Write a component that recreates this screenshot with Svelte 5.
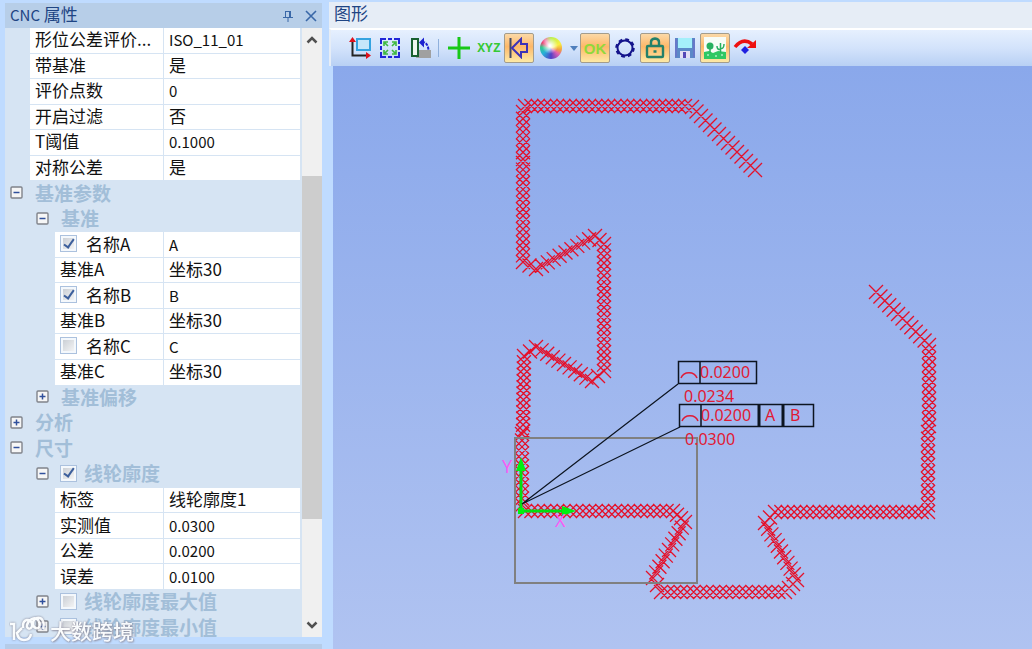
<script>
  let rows = $state([
    { name: "形位公差评价...", value: "ISO_11_01", depth: 1 },
    { name: "带基准", value: "是", depth: 1 },
    { name: "评价点数", value: "0", depth: 1 },
    { name: "开启过滤", value: "否", depth: 1 },
    { name: "T阈值", value: "0.1000", depth: 1 },
    { name: "对称公差", value: "是", depth: 1 },
    { name: "基准参数", depth: 0, group: true, open: true },
    { name: "基准", depth: 1, group: true, open: true },
    { name: "名称A", value: "A", depth: 2, checked: true },
    { name: "基准A", value: "坐标30", depth: 2 },
    { name: "名称B", value: "B", depth: 2, checked: true },
    { name: "基准B", value: "坐标30", depth: 2 },
    { name: "名称C", value: "C", depth: 2, checked: false },
    { name: "基准C", value: "坐标30", depth: 2 },
    { name: "基准偏移", depth: 1, group: true, open: false },
    { name: "分析", depth: 0, group: true, open: false },
    { name: "尺寸", depth: 0, group: true, open: true },
    { name: "线轮廓度", depth: 1, group: true, open: true, checked: true },
    { name: "标签", value: "线轮廓度1", depth: 2 },
    { name: "实测值", value: "0.0300", depth: 2 },
    { name: "公差", value: "0.0200", depth: 2 },
    { name: "误差", value: "0.0100", depth: 2 },
    { name: "线轮廓度最大值", depth: 1, group: true, open: false, checked: false },
    { name: "线轮廓度最小值", depth: 1, group: true, open: false, checked: false },
  ]);

  const scroll = { before: 124, thumb: 343, after: 94 };

  // only latin characters: drawn one size smaller
  const isLatin = (text) => /^[\x20-\x7e]+$/.test(text);

  // measured contour, one polyline per scan
  const scans = [
    [[422, 104], [359, 41], [352, 40], [192, 40], [190, 46], [190, 93]],
    [[190, 97], [190, 196], [203, 203], [262, 170], [271, 178], [271, 305], [259, 315], [203, 281], [191, 290], [190, 365]],
    [[189, 368], [189, 439]],
    [[192, 445], [340, 445], [352, 456], [320, 512], [328, 526], [452, 526], [464, 514], [432, 457], [442, 446], [595, 446], [595, 366]],
    [[596, 360], [596, 279], [543, 226]],
  ];
  const step = 6.5;
  const arm = 7;

  function crosses(points) {
    let d = "";
    for (let i = 1; i < points.length; i++) {
      const [x0, y0] = points[i - 1];
      const [x1, y1] = points[i];
      const n = Math.max(1, Math.round(Math.hypot(x1 - x0, y1 - y0) / step));
      for (let k = i === 1 ? 0 : 1; k <= n; k++) {
        const x = x0 + ((x1 - x0) * k) / n;
        const y = y0 + ((y1 - y0) * k) / n;
        d += `M${x - arm} ${y - arm}L${x + arm} ${y + arm}M${x - arm} ${y + arm}L${x + arm} ${y - arm}`;
      }
    }
    return d;
  }

  const contour = scans.map(crosses).join("");
</script>

<div class="window">
  <aside class="dock">
    <header class="dock-title">
      <h2><span class="latin">CNC</span> 属性</h2>
      <button aria-label="固定">
        <svg width="12" height="12" viewBox="0 0 12 12"><path d="M3.5 1v6M8.5 1v6M7.5 1v6M3 1.5h6M1 7.5h10M6 8v4" /></svg>
      </button>
      <button aria-label="关闭">
        <svg width="12" height="12" viewBox="0 0 12 12"><path d="M1 1l10 10M11 1L1 11" stroke-width="1.6" /></svg>
      </button>
    </header>
    <div class="dock-body">
      <table class="props">
        <tbody>
          {#each rows as row, i}
            <tr class="depth-{row.depth}" class:group={row.group}>
              <th scope="row">
                {#if row.group}
                  <button class="toggle" aria-label={row.name} aria-expanded={row.open} onclick={() => (row.open = !row.open)}>
                    <svg width="13" height="13" viewBox="0 0 13 13">
                      <rect x="1" y="1" width="11" height="11" rx="1" />
                      <path d={row.open ? "M3.5 6.5h6" : "M3.5 6.5h6M6.5 3.5v6"} />
                    </svg>
                  </button>
                {/if}
                {#if row.checked !== undefined}
                  <input type="checkbox" id="row-{i}" bind:checked={row.checked} />
                  <label for="row-{i}">{row.name}</label>
                {:else}
                  <span>{row.name}</span>
                {/if}
              </th>
              {#if !row.group}
                <td class:latin={isLatin(row.value)}>{row.value}</td>
              {/if}
            </tr>
          {/each}
        </tbody>
      </table>
      <div class="scrollbar">
        <button aria-label="向上滚动"><svg width="12" height="8" viewBox="0 0 12 8"><path d="M1.5 6.5L6 2l4.5 4.5" /></svg></button>
        <div style:flex-grow={scroll.before}></div>
        <div class="thumb" style:flex-grow={scroll.thumb}></div>
        <div style:flex-grow={scroll.after}></div>
        <button aria-label="向下滚动"><svg width="12" height="8" viewBox="0 0 12 8"><path d="M1.5 1.5L6 6l4.5-4.5" /></svg></button>
      </div>
    </div>
    <div class="dock-next"></div>

    <div class="watermark">
      <svg width="38" height="30" viewBox="0 0 38 30">
        <path d="M1 9h4v16M13 13l-5 5q1 7 7 7t7-6M14 13c-1-10 8-10 9-4s-6 6-5 1 8-9 11-5 2 9-2 8-4-9 1-10 8 4 6 11" />
      </svg>
      <span>大数跨境</span>
    </div>
  </aside>

  <main class="view">
    <header class="view-title"><h2>图形</h2></header>
    <div class="toolbar">
      <button aria-label="坐标系">
        <svg width="24" height="24" viewBox="0 0 24 24">
          <rect x="9" y="3" width="13" height="11" fill="#c5e6fa" stroke="#35a3e0" stroke-width="2" />
          <path d="M4.5 4v15.500H19" fill="none" stroke="#222" stroke-width="2" />
          <path d="M1 6l3.500-5L8 6zM18 16l5 3.500-5 3.500z" fill="#e0101c" />
        </svg>
      </button>
      <button aria-label="适合窗口">
        <svg width="22" height="22" viewBox="0 0 22 22" fill="none">
          <path d="M2 7V2h5M9 2h4M15 2h5v5M20 9v4M20 15v5h-5M13 20H9M7 20H2v-5M2 13V9" stroke="#2026d8" stroke-width="2" />
          <path d="M9 9L6 6M5 9V5h4M13 9l3-3M13 5h4v4M9 13l-3 3M5 13v4h4M13 13l3 3M17 13v4h-4" stroke="#3cb93c" stroke-width="1.6" />
        </svg>
      </button>
      <button aria-label="旋转">
        <svg width="24" height="24" viewBox="0 0 24 24">
          <path d="M11 14h12v8H8z" fill="#a0a0a0" />
          <rect x="4" y="3" width="6" height="17" fill="#eef6f0" stroke="#186030" stroke-width="2" />
          <path d="M14 6c4 0 6 3 6.500 8" fill="none" stroke="#1c22d0" stroke-width="2" stroke-dasharray="3 1" />
          <path d="M11 6.500l5-5v10z" fill="#1c22d0" />
        </svg>
      </button>
      <i class="separator"></i>
      <button aria-label="十字">
        <svg width="22" height="22" viewBox="0 0 22 22"><path d="M11 0v22M0 11h22" stroke="#18c818" stroke-width="3" /></svg>
      </button>
      <button class="xyz">XYZ</button>
      <button class="active" aria-label="返回">
        <svg width="22" height="22" viewBox="0 0 22 22" fill="none">
          <path d="M2.500 1v20" stroke="#444a66" stroke-width="2" />
          <path d="M4 11l9-9v5h6v8h-6v5z" stroke="#3c32b8" stroke-width="2" />
        </svg>
      </button>
      <button class="palette" aria-label="颜色"><span class="ball"></span></button>
      <button class="drop" aria-label="颜色选项">
        <svg width="8" height="5" viewBox="0 0 8 5"><path d="M0 0h8L4 5z" fill="#4f7fbd" /></svg>
      </button>
      <button class="active ok">OK</button>
      <button aria-label="圆">
        <svg width="22" height="22" viewBox="0 0 22 22" fill="none" stroke="#14148c">
          <circle cx="11" cy="11" r="7.500" stroke-width="2" />
          <circle cx="11" cy="11" r="8.500" stroke-width="2.500" stroke-dasharray="3.700 2.975" />
        </svg>
      </button>
      <button class="active" aria-label="锁定">
        <svg width="22" height="22" viewBox="0 0 22 22" fill="none" stroke="#23806a" stroke-width="2.400">
          <rect x="3" y="9" width="16" height="11" rx="1" />
          <path d="M7 9V5q0-3 4-3.500 4 .5 4 3.500v4M9.500 14.500h3" />
        </svg>
      </button>
      <button aria-label="保存">
        <svg width="22" height="22" viewBox="0 0 22 22">
          <path d="M1 1h20v20H1z" fill="#5b88c8" />
          <path d="M4 1h14v10H4z" fill="#a4effa" />
          <path d="M6 14h10v7H6z" fill="#e2dff5" />
          <path d="M9 15h3v6H9z" fill="#5548b8" />
          <path d="M2 2v18M20 2v18" stroke="#7568c8" />
        </svg>
      </button>
      <button class="active" aria-label="图片">
        <svg width="22" height="22" viewBox="0 0 22 22">
          <path d="M0 0h22v22H0z" fill="#f7fcf7" />
          <path d="M0 15l5-1 4 2 5-2 8 1v7H0z" fill="#2fc864" />
          <circle cx="6" cy="9" r="3.500" fill="#28b060" />
          <path d="M6 10v6M16.500 6v10M13 9q0 4 3.500 3.500M20 7q0 5-3.500 4.500" fill="none" stroke="#28b060" stroke-width="1.500" />
          <path d="M3 18h2M11 19h2M17 18h2" stroke="#e9fff0" />
        </svg>
      </button>
      <button aria-label="旋转视图">
        <svg width="24" height="22" viewBox="0 0 24 22">
          <path d="M2 10Q10 0 19 7" fill="none" stroke="#ee1010" stroke-width="3.500" />
          <path d="M23 3v8h-9z" fill="#ee1010" />
          <path d="M12 9l4 4-4 4-4-4z" fill="#2020e0" />
        </svg>
      </button>
    </div>

    <div class="canvas">
      <svg width="100%" height="100%">
        <path class="contour" d={contour} />
        <rect class="frame" x="182" y="372" width="182" height="145" />
        <g class="axes">
          <path class="shaft" d="M188 402v43h44" />
          <path d="M188 391l5 14h-10zM243 445l-14-5v10zM185 442h6v6h-6z" />
          <text x="169" y="407">Y</text>
          <text x="222" y="461">X</text>
        </g>
        <g class="callout">
          <path class="leader" d="M189 438L345 318M189 438L347 361" />
          <rect x="345.5" y="295.5" width="78" height="22" />
          <path d="M367 296v21" />
          <rect x="346.5" y="338.5" width="134" height="22" />
          <path d="M368 339v21" />
          <path class="thick" d="M426 339v21M450 339v21" />
          <path class="profile" d="M348 312a8.500 8 0 0 1 16 0M349 355a8.500 8 0 0 1 16 0" />
          <text x="367" y="312">0.0200</text>
          <text x="351" y="336">0.0234</text>
          <text x="368" y="355">0.0200</text>
          <text x="432" y="355">A</text>
          <text x="457" y="355">B</text>
          <text x="352" y="379">0.0300</text>
        </g>
      </svg>
    </div>
  </main>
</div>

<style>
  :global(body) {
    margin: 0;
  }

  .window {
    display: flex;
    height: 100vh;
    overflow: hidden;
    background: #bfdbff;
    color: #111;
    font: 17px "Noto Sans CJK SC", sans-serif;
  }

  h2 {
    margin: 0;
    font-size: 17px;
    font-weight: 400;
    line-height: 22px;
    color: #1f4584;
  }

  button {
    display: flex;
    align-items: center;
    justify-content: center;
    padding: 0;
    border: 0;
    background: none;
    font: inherit;
  }

  .latin {
    font-size: 15px;
  }

  /* property panel */
  .dock {
    position: relative;
    display: flex;
    flex: none;
    flex-direction: column;
    box-sizing: border-box;
    width: 329px;
    padding: 3px 7px 0 5px;
  }

  .dock-title {
    display: flex;
    height: 25px;
    background: #b7cee8;
  }

  .dock-title h2 {
    flex: 1;
    padding-left: 5px;
  }

  .dock-title button {
    width: 23px;
  }

  .dock-title path {
    fill: none;
    stroke: #3a68a8;
  }

  .dock-body {
    display: flex;
    flex: 1;
    min-height: 0;
    overflow: hidden;
    background: #d6e4f3;
  }

  .dock-next {
    height: 5px;
    margin-top: 7px;
    background: #b5cce9;
  }

  .props {
    display: flex;
    flex: 1;
    margin-bottom: -4px;
  }

  .props tbody {
    display: grid;
    flex: 1;
    grid-auto-rows: minmax(0, 1fr);
  }

  .props tr {
    display: flex;
    min-height: 0;
  }

  .props th,
  .props td {
    display: flex;
    align-items: center;
    box-sizing: border-box;
    padding: 0 0 2px 5px;
    border-bottom: 1px solid #d6e4f3;
    background: #fff;
    font-weight: 400;
    line-height: 22px;
    white-space: nowrap;
  }

  .props td {
    flex: 1;
    border-left: 1px solid #d6e4f3;
  }

  .props .latin {
    padding-bottom: 0;
  }

  .depth-1 th {
    width: 133px;
    margin-left: 25px;
  }

  .depth-2 th {
    width: 108px;
    margin-left: 50px;
  }

  .props .group th {
    width: auto;
    margin-left: 0;
    background: none;
    color: #a2bed8;
    font-size: 19px;
    font-weight: 700;
  }

  .props .group.depth-1 th {
    padding-left: 31px;
  }

  .toggle {
    width: 13px;
    margin-right: 12px;
  }

  .toggle rect {
    fill: #f6f6f6;
    stroke: #80838a;
    stroke-width: 1.4;
  }

  .toggle path {
    stroke: #30509c;
    stroke-width: 1.5;
  }

  input[type="checkbox"] {
    display: grid;
    place-items: center;
    appearance: none;
    box-sizing: border-box;
    width: 17px;
    height: 17px;
    margin: 0 9px 0 0;
    border: 1px solid #abc1de;
    outline: 2px solid #f4f8fc;
    outline-offset: -3px;
    background: linear-gradient(135deg, #c4c9d0, #fafafa);
  }

  .group input[type="checkbox"] {
    margin-right: 7px;
    margin-left: -1px;
  }

  input[type="checkbox"]:checked::after {
    content: "";
    width: 4px;
    height: 9px;
    margin-bottom: 3px;
    border: solid #3c5f9c;
    border-width: 0 2px 2px 0;
    transform: rotate(35deg);
  }

  .scrollbar {
    display: flex;
    flex-direction: column;
    width: 20px;
    margin-left: 2px;
    background: #f0f0f0;
  }

  .scrollbar button {
    height: 24px;
  }

  .scrollbar path {
    fill: none;
    stroke: #505050;
    stroke-width: 2.5;
  }

  .thumb {
    background: #cdcdcd;
  }

  .watermark {
    position: absolute;
    left: 9px;
    bottom: 4px;
    display: flex;
    align-items: center;
    gap: 3px;
    color: #fff;
    font-size: 21px;
    font-weight: 500;
    line-height: 30px;
    opacity: 0.9;
    text-shadow: 0 0 2px #778, 1px 1px 2px #99a;
  }

  .watermark path {
    fill: none;
    stroke: #fff;
    stroke-width: 2.5;
    filter: drop-shadow(0 0 1px #778);
  }

  /* graphics view */
  .view {
    display: flex;
    flex: 1;
    flex-direction: column;
    min-width: 0;
    padding-top: 2px;
  }

  .view-title {
    height: 26px;
    padding-left: 5px;
    background: #e6edf6;
  }

  .toolbar {
    display: flex;
    align-items: center;
    box-sizing: border-box;
    height: 38px;
    padding-left: 14px;
    border-top: 2px solid #fff;
    border-left: 2px solid #e6edf6;
    background: linear-gradient(#e6f0fe, #d3e3fb 50%, #b8d0f4);
  }

  .toolbar button {
    box-sizing: border-box;
    width: 30px;
    height: 30px;
  }

  .toolbar .active {
    border: 1px solid #a39c8c;
    border-radius: 2px;
    background: linear-gradient(#fbd9a8, #fdb869 45%, #fde9a5);
  }

  .toolbar .xyz {
    color: #35c935;
    font: 700 13px "Liberation Mono", monospace;
  }

  .toolbar .ok {
    color: #90d83c;
    font: 700 15px "Liberation Sans", sans-serif;
  }

  .toolbar .palette {
    width: 34px;
  }

  .toolbar .drop {
    width: 12px;
  }

  .separator {
    width: 1px;
    height: 18px;
    margin: 0 5px 0 3px;
    background: #8fb0dc;
  }

  .ball {
    width: 22px;
    height: 22px;
    border-radius: 50%;
    background:
      radial-gradient(circle at 45% 40%, #fff 5%, #fff0 45%),
      conic-gradient(#b8f050, #f8f040 18%, #f0a040 28%, #e060b0 36%, #5040c8 50%, #28b0d8 65%, #30c890 76%, #f04070 84%, #f080b0 90%, #b8f050);
  }

  .canvas {
    flex: 1;
    min-height: 0;
    margin-left: 4px;
    background: linear-gradient(#8aa8eb, #b0c3f1);
  }

  .canvas svg {
    display: block;
  }

  .contour {
    fill: none;
    stroke: #e4102a;
    stroke-width: 1.3;
  }

  .frame {
    fill: none;
    stroke: #808080;
    stroke-width: 2;
  }

  .axes {
    fill: #00f010;
  }

  .axes .shaft {
    fill: none;
    stroke: #00e010;
    stroke-width: 3;
  }

  .axes text {
    fill: #f95cf5;
    font: 18px "Noto Sans", sans-serif;
  }

  .callout path,
  .callout rect {
    fill: none;
    stroke: #0c1420;
    stroke-width: 1.5;
  }

  .callout .leader {
    stroke-width: 1.2;
  }

  .callout .thick {
    stroke-width: 3;
  }

  .callout .profile {
    stroke: #e01a34;
  }

  .callout text {
    fill: #e01a34;
    font: 16px "Noto Sans", sans-serif;
  }
</style>
